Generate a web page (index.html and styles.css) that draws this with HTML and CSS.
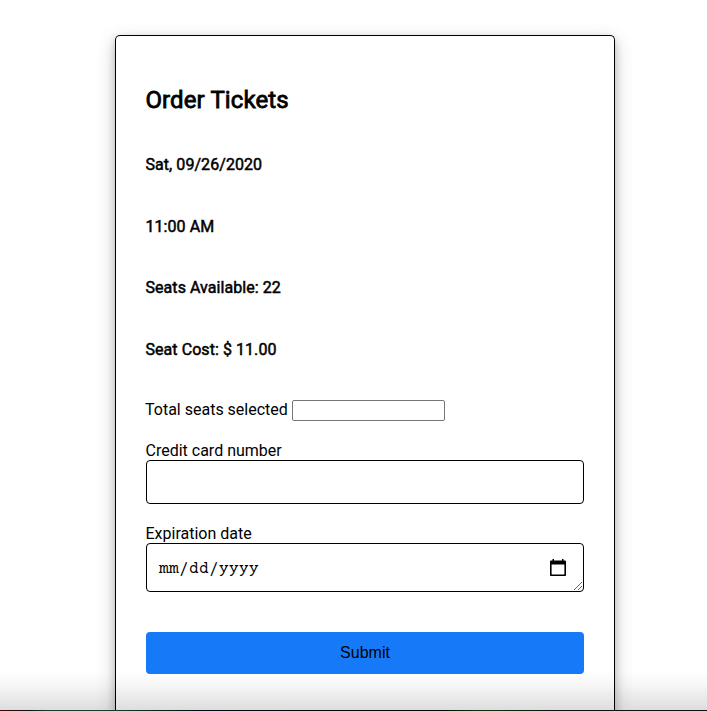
FILE: index.html
```html
<!DOCTYPE html>
<html lang="en">
<head>
<meta charset="utf-8">
<title>Order Tickets</title>
<link rel="stylesheet" href="styles.css">
</head>
<body>
<main class="page">
  <form class="card">
    <h2 class="title">Order Tickets</h2>
    <h4 class="detail">Sat, 09/26/2020</h4>
    <h4 class="detail">11:00 AM</h4>
    <h4 class="detail">Seats Available: 22</h4>
    <h4 class="detail">Seat Cost: $ 11.00</h4>
    <div class="seats">
      <label class="seats-label" for="seats">Total seats selected</label>
      <input class="seats-input" id="seats" type="text">
    </div>
    <label class="label" for="card">Credit card number</label>
    <input class="field" id="card" type="text">
    <label class="label">Expiration date</label>
    <div class="field date-field">
      <span class="date"><span>mm</span><span>/</span><span>dd</span><span>/</span><span>yyyy</span></span>
      <svg class="calendar" viewBox="0 0 16 18"><path d="M.8 3.5h14.4v12.7H.8z" fill="none" stroke="#000" stroke-width="1.6" stroke-linejoin="round"/><path d="M0 2.5Q0 1.5 1 1.5h14q1 0 1 1V5.5H0zM2.5 0H4v3H2.5zM12 0h1.5v3H12z"/></svg>
      <svg class="grip" viewBox="0 0 8 8"><path d="M0 8L8 0M4 8l4-4" stroke="#555" stroke-width=".9"/></svg>
    </div>
    <button class="submit" type="button">Submit</button>
  </form>
</main>
<div class="edge-shade"></div>
</body>
</html>
```
FILE: styles.css
```css
* { box-sizing: border-box; }
body {
  margin: 0;
  background: #fff;
  color: #000;
  font: 16px/19px Roboto, sans-serif;
}
.page {
  height: 711px;
  padding: 35px 0 0 115px;
  overflow: hidden;
}
.card {
  width: 500px;
  height: 676px;
  padding: 50px 30px 0;
  border: 1px solid #000;
  border-bottom: 0;
  border-radius: 5px 5px 0 0;
  background: #fff;
  box-shadow: 0 4px 8px rgba(0, 0, 0, .2), 0 6px 20px rgba(0, 0, 0, .19);
}
.title, .detail {
  margin: 0 0 0 -.5px;
  font-weight: 400;
  letter-spacing: .06px;
  -webkit-text-stroke: .5px #000;
}
.title {
  height: 69px;
  font-size: 24px;
  line-height: 28px;
  letter-spacing: .1px;
  -webkit-text-stroke-width: .8px;
}
.detail { height: 61.6px; }
.seats {
  display: flex;
  align-items: center;
  gap: 4px;
  height: 21px;
  margin: -1px 0 20px -1px;
}
.seats-label { padding-bottom: 2px; }
.seats-input {
  width: 153px;
  height: 21px;
  margin: 0;
  padding: 1px 2px;
  border: 1px solid #767676;
  border-radius: 2px;
}
.label { display: block; height: 19px; margin-left: -.5px; }
.field {
  display: block;
  width: 438px;
  height: 44px;
  margin: 0 0 20px;
  padding: 12px;
  border: 1px solid #000;
  border-radius: 4px;
  background: #fff;
}
.date-field {
  position: relative;
  display: flex;
  align-items: center;
  justify-content: space-between;
  height: 49px;
  margin-bottom: 40px;
  padding: 0 17px 0 12px;
}
.date {
  padding-top: 2px;
  font: 16px/18px "Courier Prime", "Liberation Mono", monospace;
  letter-spacing: .4px;
}
.calendar { width: 16px; height: 18px; }
.grip { position: absolute; right: 1px; bottom: 1px; width: 8px; height: 8px; }
.submit {
  display: block;
  width: 438px;
  height: 42px;
  padding: 0 0 2px;
  border: 0;
  border-radius: 4px;
  background: #167af8;
  color: #000;
  font: 16px/19px "Liberation Sans", sans-serif;
}
.edge-shade {
  position: absolute;
  left: 0;
  right: 0;
  top: 671px;
  height: 40px;
  border: 0 solid;
  border-width: 0 0 1px;
  border-image: linear-gradient(90deg, #400 0, #111 4%, #153c2d 7%, #153c2d 16%, #080a18 28%, #050505 62%, #103008 68%, #111 78%) 1;
  background: linear-gradient(transparent, rgba(0, 0, 0, .03) 35%, rgba(0, 0, 0, .13));
}
```
